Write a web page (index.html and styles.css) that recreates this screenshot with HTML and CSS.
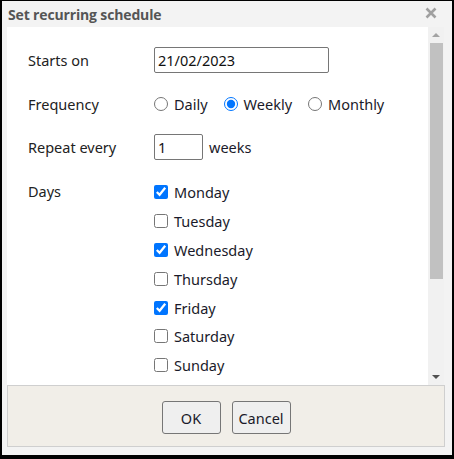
FILE: index.html
```html
<!DOCTYPE html>
<html>
<head>
<meta charset="utf-8">
<link rel="stylesheet" href="styles.css">
</head>
<body>
<div class="dialog">
  <div class="titlebar">
    <span class="title">Set recurring schedule</span>
    <svg class="close" width="12" height="12" viewBox="0 0 12 12"><path d="M1.5 1.5 L10.5 10.5 M10.5 1.5 L1.5 10.5" stroke="#a0a0a0" stroke-width="2.6" stroke-linecap="butt"/></svg>
  </div>
  <div class="main">
    <div class="content">
      <div class="row r1">
        <div class="label">Starts on</div>
        <input class="text date" type="text" value="21/02/2023">
      </div>
      <div class="row r2">
        <div class="label">Frequency</div>
        <div class="radios">
          <label class="opt"><input type="radio" name="f"><span>Daily</span></label>
          <label class="opt"><input type="radio" name="f" checked><span>Weekly</span></label>
          <label class="opt"><input type="radio" name="f"><span>Monthly</span></label>
        </div>
      </div>
      <div class="row r3">
        <div class="label">Repeat every</div>
        <input class="text num" type="text" value="1">
        <span class="unit">weeks</span>
      </div>
      <div class="days">
        <div class="label dl">Days</div>
        <div class="daylist">
          <label class="day"><input type="checkbox" checked><span>Monday</span></label>
          <label class="day"><input type="checkbox"><span>Tuesday</span></label>
          <label class="day"><input type="checkbox" checked><span>Wednesday</span></label>
          <label class="day"><input type="checkbox"><span>Thursday</span></label>
          <label class="day"><input type="checkbox" checked><span>Friday</span></label>
          <label class="day"><input type="checkbox"><span>Saturday</span></label>
          <label class="day"><input type="checkbox"><span>Sunday</span></label>
        </div>
      </div>
    </div>
    <div class="scrollbar">
      <div class="arrow up"></div>
      <div class="thumb"></div>
      <div class="spacer"></div>
      <div class="arrow down"></div>
    </div>
  </div>
  <div class="footer">
    <button class="btn ok">OK</button>
    <button class="btn">Cancel</button>
  </div>
  <div class="bottom"></div>
</div>
</body>
</html>
```

FILE: styles.css
```css
* { box-sizing: border-box; }
html, body { margin: 0; padding: 0; }
body {
  width: 454px;
  height: 459px;
  background: #000;
  font-family: "Noto Sans", "Open Sans", sans-serif;
  overflow: hidden;
}
.dialog {
  width: 454px;
  height: 459px;
  border-style: solid;
  border-color: #000;
  border-width: 1px 2px 4px 2px;
  background: #f3f3f3;
  display: flex;
  flex-direction: column;
}
.titlebar {
  height: 26px;
  display: flex;
  align-items: center;
  justify-content: space-between;
  padding: 0 15px 0 6px;
  flex: none;
}
.title {
  font-family: "Open Sans", "Noto Sans", sans-serif;
  font-weight: 700;
  font-size: 14px;
  color: #555;
  letter-spacing: -0.15px;
}
.close {
  display: block;
  margin-top: -2px;
}
.main {
  height: 358px;
  margin: 0 8px 0 5px;
  display: flex;
  flex: none;
}
.content {
  flex: 1;
  background: #fff;
  padding: 20px 0 0 21px;
  overflow: hidden;
  color: #1a1a2a;
  font-size: 14.5px;
}
.row {
  height: 26px;
  display: flex;
  align-items: center;
}
.r2 { margin-top: 18px; }
.r3 { margin-top: 17px; }
.label {
  width: 126px;
  flex: none;
  color: #222;
}
.text {
  height: 26px;
  border: 1px solid #767676;
  border-radius: 2px;
  font-family: inherit;
  font-size: 14.5px;
  color: #111;
  padding: 0 3px;
  margin: 0;
  outline: none;
}
.date { width: 175px; }
.num { width: 49px; }
.unit { margin-left: 6px; }
.radios { display: flex; align-items: center; }
.opt {
  display: flex;
  align-items: center;
  margin-right: 16px;
}
.opt input {
  width: 14px;
  height: 14px;
  margin: 0 6px 0 0;
  accent-color: #0075ff;
}
.days {
  margin-top: 18px;
  display: flex;
}
.dl {
  height: 29px;
  line-height: 26px;
}
.daylist { display: flex; flex-direction: column; }
.day {
  height: 28.8px;
  display: flex;
  align-items: center;
}
.day input {
  width: 14px;
  height: 14px;
  margin: 0 6px 0 0;
  accent-color: #0075ff;
}
.scrollbar {
  width: 16px;
  background: #f1f1f1;
  display: flex;
  flex-direction: column;
  align-items: center;
  flex: none;
}
.arrow {
  width: 0;
  height: 0;
  border-left: 4px solid transparent;
  border-right: 4px solid transparent;
  flex: none;
}
.up {
  border-bottom: 4px solid #a3a3a3;
  margin-top: 6px;
}
.down {
  border-top: 4px solid #505050;
  margin-bottom: 6px;
}
.thumb {
  width: 13px;
  height: 236px;
  background: #c1c1c1;
  margin-top: 6px;
  flex: none;
}
.spacer { flex: 1; }
.footer {
  height: 62px;
  margin: 0 7px 0 5px;
  border: 1px solid #cfcfcf;
  background: #f1eee8;
  display: flex;
  justify-content: center;
  align-items: center;
  gap: 11px;
  padding-top: 3px;
  flex: none;
}
.btn {
  height: 33px;
  width: 59px;
  border: 1px solid #767676;
  border-radius: 3px;
  background: #efefef;
  font-family: inherit;
  font-size: 14.5px;
  color: #1a1a2a;
  padding: 0;
}
.bottom { flex: 1; }
```
